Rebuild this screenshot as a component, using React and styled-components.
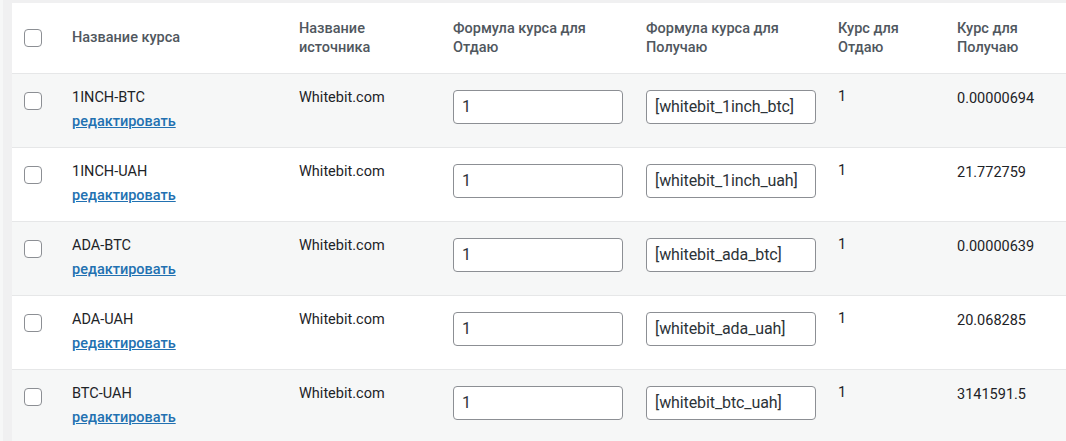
import React from "react";
import styled, { createGlobalStyle } from "styled-components";

const GlobalStyle = createGlobalStyle`
  html, body {
    margin: 0;
    padding: 0;
    background: #f0f0f1;
    overflow: hidden;
  }
  body {
    font-family: Roboto, "Liberation Sans", Arial, sans-serif;
    font-size: 14.5px;
    color: #2c3338;
  }
`;

const Page = styled.div`
  padding: 3px 0 0 9px;
  border-left: 3px solid #f6f7f7;
`;

const Table = styled.table`
  width: 1120px;
  border-collapse: collapse;
  table-layout: fixed;
  background: #fff;
`;

const HeadCell = styled.th`
  height: 70px;
  padding: 0 12px;
  text-align: left;
  vertical-align: middle;
  font-weight: 500;
  font-size: 14.5px;
  line-height: 19px;
  color: #50575e;
  border-bottom: 1px solid #e6e7e8;
  box-sizing: border-box;
`;

const Row = styled.tr`
  background: ${(p) => (p.$odd ? "#f6f7f7" : "#fff")};
  border-bottom: 1px solid #e6e7e8;
`;

const Cell = styled.td`
  height: 74px;
  padding: 14px 12px 0;
  vertical-align: top;
  line-height: 20px;
  color: #1d2327;
  box-sizing: border-box;
`;

const CheckCell = styled(Cell)`
  padding: 18px 0 0 12px;
`;

const HeadCheckCell = styled(HeadCell)`
  padding: 0 0 0 12px;
`;

const Check = styled.span`
  display: block;
  width: 16px;
  height: 16px;
  border: 1px solid #8c8f94;
  border-radius: 4px;
  background: #fff;
`;

const EditLink = styled.a`
  display: block;
  margin-top: 4px;
  color: #2271b1;
  font-weight: 500;
  text-decoration: underline;
  cursor: pointer;
`;

const InputCell = styled(Cell)`
  padding-top: 16px;
`;

const Field = styled.input`
  width: 170px;
  height: 34px;
  box-sizing: border-box;
  border: 1px solid #8c8f94;
  border-radius: 4px;
  padding: 0 8px;
  font-family: Roboto, "Liberation Sans", Arial, sans-serif;
  font-size: 16px;
  letter-spacing: -0.1px;
  color: #2c3338;
  background: #fff;
  outline: none;
`;

const ValueCell = styled(Cell)`
  padding-top: ${(p) => (p.$low ? 15 : 13)}px;
`;

const rows = [
  { name: "1INCH-BTC", formula: "[whitebit_1inch_btc]", rate: "0.00000694" },
  { name: "1INCH-UAH", formula: "[whitebit_1inch_uah]", rate: "21.772759" },
  { name: "ADA-BTC", formula: "[whitebit_ada_btc]", rate: "0.00000639" },
  { name: "ADA-UAH", formula: "[whitebit_ada_uah]", rate: "20.068285" },
  { name: "BTC-UAH", formula: "[whitebit_btc_uah]", rate: "3141591.5" },
];

export default function App() {
  return (
    <Page>
      <GlobalStyle />
      <Table>
        <colgroup>
          <col style={{ width: 48 }} />
          <col style={{ width: 227 }} />
          <col style={{ width: 154 }} />
          <col style={{ width: 193 }} />
          <col style={{ width: 192 }} />
          <col style={{ width: 119 }} />
          <col style={{ width: 187 }} />
        </colgroup>
        <thead>
          <tr>
            <HeadCheckCell>
              <Check />
            </HeadCheckCell>
            <HeadCell>Название курса</HeadCell>
            <HeadCell>
              Название
              <br />
              источника
            </HeadCell>
            <HeadCell>
              Формула курса для
              <br />
              Отдаю
            </HeadCell>
            <HeadCell>
              Формула курса для
              <br />
              Получаю
            </HeadCell>
            <HeadCell>
              Курс для
              <br />
              Отдаю
            </HeadCell>
            <HeadCell>
              Курс для
              <br />
              Получаю
            </HeadCell>
          </tr>
        </thead>
        <tbody>
          {rows.map((r, i) => (
            <Row key={r.name} $odd={i % 2 === 0}>
              <CheckCell>
                <Check />
              </CheckCell>
              <Cell>
                {r.name}
                <EditLink>редактировать</EditLink>
              </Cell>
              <Cell>Whitebit.com</Cell>
              <InputCell>
                <Field defaultValue="1" />
              </InputCell>
              <InputCell>
                <Field defaultValue={r.formula} />
              </InputCell>
              <ValueCell>1</ValueCell>
              <ValueCell $low>{r.rate}</ValueCell>
            </Row>
          ))}
        </tbody>
      </Table>
    </Page>
  );
}
